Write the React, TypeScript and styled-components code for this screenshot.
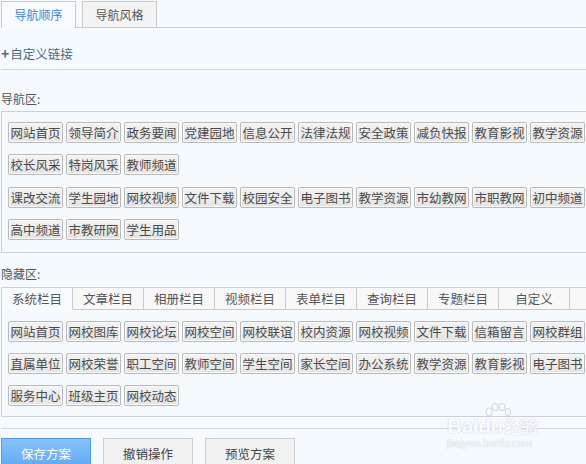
import React from "react";
import styled, { createGlobalStyle, css } from "styled-components";

const GlobalStyle = createGlobalStyle`
  html, body {
    margin: 0;
    padding: 0;
    overflow: hidden;
    background: #f5faff;
  }
  body {
    font-family: "Noto Sans CJK SC", "Noto Sans", sans-serif;
    font-size: 12px;
    color: #555;
  }
`;

const Page = styled.div`
  position: relative;
  width: 585px;
  height: 464px;
  padding-left: 1px;
  overflow: hidden;
`;

const TabBar = styled.div`
  display: flex;
  gap: 6px;
  padding-top: 1px;
  border-bottom: 1px solid #cbcbcb;
`;

const TopTab = styled.div<{ $active?: boolean }>`
  width: 73px;
  height: 25px;
  line-height: 25px;
  text-align: center;
  border: 1px solid #c9c9c9;
  border-bottom: none;
  margin-bottom: -1px;
  background: ${(p) => (p.$active ? "#f8fbff" : "#f4f4f4")};
  color: ${(p) => (p.$active ? "#3d85c4" : "#555")};
  ${(p) =>
    p.$active &&
    css`
      height: 26px;
    `}
`;

const LinkRow = styled.div`
  padding: 17px 0 7px;
  line-height: 16px;
  font-size: 12.5px;
  border-bottom: 1px solid #d6d9dc;
  color: #4a6a82;
  b {
    font-size: 14px;
    margin-right: 1px;
  }
`;

const Label = styled.div<{ $top: number; $bottom: number }>`
  margin-top: ${(p) => p.$top}px;
  margin-bottom: ${(p) => p.$bottom}px;
  line-height: 16px;
  color: #555;
`;

const Box = styled.div<{ $pad: string }>`
  width: 610px;
  border: 1px solid #cdd1d6;
  padding: ${(p) => p.$pad};
`;

const Group = styled.div`
  display: flex;
  flex-wrap: wrap;
  gap: 11px 3px;
  width: 580px;
  & + & {
    margin-top: 12px;
  }
`;

const Item = styled.div`
  width: 55px;
  height: 21px;
  box-sizing: border-box;
  border: 1px solid #b9b9b9;
  border-radius: 2px;
  box-shadow: inset 0 0 0 1px #fafafa;
  background: linear-gradient(#f3f3f3, #e4e4e4);
  color: #4a4a4a;
  line-height: 19px;
  font-size: 12.5px;
  text-align: center;
  white-space: nowrap;
`;

const SubTabs = styled.div`
  display: flex;
`;

const SubTab = styled.div<{ $active?: boolean; $fill?: boolean }>`
  width: 71px;
  flex: ${(p) => (p.$fill ? "1" : "none")};
  height: 22px;
  box-sizing: border-box;
  line-height: 21px;
  font-size: 12.5px;
  text-align: center;
  color: #555;
  border-right: ${(p) => (p.$fill ? "none" : "1px solid #cbcbcb")};
  border-bottom: 1px solid ${(p) => (p.$active ? "transparent" : "#cbcbcb")};
  background: ${(p) => (p.$active ? "#f7fbff" : "#f8f8f8")};
`;

const SubBody = styled.div`
  padding: 11px 0 10px 6px;
`;

const Footer = styled.div`
  margin-top: 11px;
  border-top: 1px solid #d6d9dc;
  padding-top: 9px;
  display: flex;
  gap: 12px;
`;

const Action = styled.button<{ $primary?: boolean }>`
  width: 90px;
  height: 30px;
  font: inherit;
  font-size: 12.5px;
  padding: 0;
  border: 1px solid ${(p) => (p.$primary ? "#4b9be8" : "#cfcfcf")};
  background: ${(p) =>
    p.$primary ? "linear-gradient(#86c2fc, #62a8f5)" : "#f1f1f1"};
  color: ${(p) => (p.$primary ? "#fff" : "#444")};
`;

const Watermark = styled.div`
  position: absolute;
  left: 447px;
  top: 403px;
  width: 112px;
  color: #f9fbfd;
  pointer-events: none;
  font-family: "Liberation Sans", sans-serif;
  text-shadow: 0 0 1px #c9d0d6, 0 0 1px #c9d0d6;
  .logo {
    display: flex;
    align-items: baseline;
    font-size: 21px;
    font-weight: bold;
    line-height: 21px;
    margin-top: 12px;
    letter-spacing: -0.5px;
  }
  .logo span {
    font-family: "Noto Sans CJK SC", sans-serif;
    font-size: 17px;
    margin-left: 2px;
  }
  .url {
    font-size: 11px;
    line-height: 14px;
    letter-spacing: -0.2px;
  }
  svg {
    position: absolute;
    left: 36px;
    top: 0;
  }
`;

const navGroups = [
  ["网站首页", "领导简介", "政务要闻", "党建园地", "信息公开", "法律法规", "安全政策", "减负快报", "教育影视", "教学资源", "校长风采", "特岗风采", "教师频道"],
  ["课改交流", "学生园地", "网校视频", "文件下载", "校园安全", "电子图书", "教学资源", "市幼教网", "市职教网", "初中频道", "高中频道", "市教研网", "学生用品"],
];

const hiddenItems = [
  "网站首页", "网校图库", "网校论坛", "网校空间", "网校联谊", "校内资源", "网校视频", "文件下载", "信箱留言", "网校群组",
  "直属单位", "网校荣誉", "职工空间", "教师空间", "学生空间", "家长空间", "办公系统", "教学资源", "教育影视", "电子图书",
  "服务中心", "班级主页", "网校动态",
];

const subTabs = ["系统栏目", "文章栏目", "相册栏目", "视频栏目", "表单栏目", "查询栏目", "专题栏目", "自定义"];

export default function App() {
  return (
    <Page>
      <GlobalStyle />
      <TabBar>
        <TopTab $active>导航顺序</TopTab>
        <TopTab>导航风格</TopTab>
      </TabBar>

      <LinkRow>
        <b>+</b>自定义链接
      </LinkRow>

      <Label $top={21} $bottom={4}>导航区:</Label>
      <Box $pad="10px 0 12px 6px">
        {navGroups.map((g, i) => (
          <Group key={i}>
            {g.map((t, j) => (
              <Item key={j}>{t}</Item>
            ))}
          </Group>
        ))}
      </Box>

      <Label $top={13} $bottom={5}>隐藏区:</Label>
      <Box $pad="0">
        <SubTabs>
          {subTabs.map((t, i) => (
            <SubTab key={t} $active={i === 0}>
              {t}
            </SubTab>
          ))}
          <SubTab $fill />
        </SubTabs>
        <SubBody>
          <Group>
            {hiddenItems.map((t, i) => (
              <Item key={i}>{t}</Item>
            ))}
          </Group>
        </SubBody>
      </Box>

      <Footer>
        <Action $primary>保存方案</Action>
        <Action>撤销操作</Action>
        <Action>预览方案</Action>
      </Footer>

      <Watermark>
        <svg width="28" height="14" viewBox="0 0 28 14" fill="none" stroke="#d3d9de" strokeWidth="1.2">
          <ellipse cx="6" cy="9" rx="3" ry="4" />
          <ellipse cx="12" cy="4" rx="3" ry="3.5" />
          <ellipse cx="19" cy="4" rx="3" ry="3.5" />
          <ellipse cx="25" cy="9" rx="2.5" ry="3.5" />
        </svg>
        <div className="logo">
          Baidu<span>经验</span>
        </div>
        <div className="url">jingyan.baidu.com</div>
      </Watermark>
    </Page>
  );
}
